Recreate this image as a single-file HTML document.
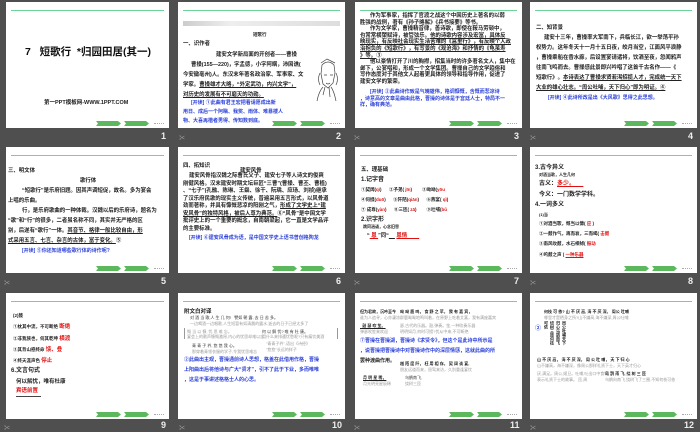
<!DOCTYPE html>
<html><head><meta charset="utf-8">
<style>
*{margin:0;padding:0;box-sizing:border-box}
body{width:700px;height:431px;background:#4f4f4f;position:relative;overflow:hidden;font-family:"Liberation Sans","Noto Sans CJK SC",sans-serif}
.s{position:absolute;background:#fff;overflow:hidden}
.s:before{content:"";position:absolute;left:5px;right:5px;top:8px;height:1px;background:#6fd49c}
.btn{position:absolute;bottom:2px;height:5px;width:25px;background:#5cb85c;clip-path:polygon(0 0,88% 0,100% 50%,88% 100%,0 100%,8% 50%)}
.b1{right:48px}.b2{right:20px}
.dots{position:absolute;bottom:3px;right:5px;width:10px;height:2px;border-top:1px dotted #aaa}
.t{position:absolute;font-size:5.4px;line-height:10px;color:#222;white-space:nowrap;font-weight:bold}
.bl{color:#2a3fd8;font-weight:bold}
.r{color:#e01010;font-weight:bold}
.u{text-decoration:underline}
.n{position:absolute;color:#eee;font-size:9px;font-weight:bold}
.ic{position:absolute;color:#aaa;font-size:6px}
.g{color:#999;font-weight:normal}
</style></head><body>

<!-- row 1 -->
<div class="s" style="left:6px;top:2px;width:163px;height:126px">
 <div class="t" style="left:19px;top:44px;font-size:10.5px;line-height:12px;color:#111">7&nbsp;&nbsp;&nbsp;短歌行&nbsp;&nbsp;*归园田居(其一)</div>
 <div class="t" style="left:38px;top:96px;font-size:5.5px">第一PPT模板网-WWW.1PPT.COM</div>
 <div class="btn b1"></div><div class="btn b2"></div><div class="dots"></div>
</div>
<div class="s" style="left:178px;top:2px;width:167px;height:126px">
 <div style="position:absolute;left:5px;top:19px;width:157px;height:5px;background:linear-gradient(90deg,#ccc,#eee 30%,#ddd)"></div>
 <div class="t" style="left:75px;top:28px;font-size:4.5px">短歌行</div>
 <div class="t" style="left:5px;top:37px">一、识作者</div>
 <div class="t" style="left:38px;top:48px">建安文学新局面的开创者——曹操</div>
 <div class="t" style="left:13px;top:58px">曹操(155—220)，字孟德，小字阿瞒，沛国谯(</div>
 <div class="t" style="left:5px;top:68px">今安徽亳州)人。东汉末年著名政治家、军事家、文</div>
 <div class="t" style="left:5px;top:78px">学家。<span class="u">曹操雄才大略，“外定武功，内兴文学”，</span></div>
 <div class="t u" style="left:5px;top:88px">对历史的发展有不可磨灭的功勋。</div>
 <div class="t bl" style="left:13px;top:97px;font-size:5px;line-height:9px">[开读] ①此曲有君王宏把看请愿成出新<br><span style="margin-left:-8px">用日、成后一个阿瞒、我奖、雨体、难暴楼人</span><br><span style="margin-left:-8px">物、大喜再楷者男得、传知数到底。</span></div>
 <svg style="position:absolute;left:134px;top:55px" width="30" height="45" viewBox="0 0 30 45"><g fill="none" stroke="#444" stroke-width=".7"><path d="M10 8q6-6 12 0l1 8-2 10-5 5-5-4-2-10z"/><path d="M9 6l6-4 8 4M12 18h3m3 0h3M14 26q2 2 4 0"/><path d="M13 30l-2 8m6-8 1 10M5 44q2-10 6-14m13 14q-2-10-5-14"/><path d="M8 16q-3 6 0 12m16-12q3 6 0 12"/></g></svg>
 <div class="btn b1"></div><div class="btn b2"></div><div class="dots"></div>
</div>
<div class="s" style="left:355px;top:2px;width:167px;height:126px">
 <div class="t" style="left:15px;top:11px;line-height:6.6px">作为军事家，指挥了官渡之战这个中国历史上著名的以弱<br><span style="margin-left:-10px">胜强的战例，著有《孙子略解》《兵书接要》等书。</span><br>作为文学家，曹操精音律，善诗歌，即使在鞍马劳顿中，<br><span style="margin-left:-10px">也常常横槊赋诗，被管弦乐。<span class="u">他的诗歌内容涉及宏富，具体反</span></span><br><span style="margin-left:-10px" class="u">映现实，有反映社会现实生活苦难的《蒿里行》，有反映个人政</span><br><span style="margin-left:-10px" class="u">治抱负的《短歌行》，有写景的《观沧海》和抒情的《龟虽寿</span><br><span style="margin-left:-10px"><span class="u">》等。</span>③</span><br>他以豪情打开了川的胸襟，招集当时的许多著名文人，集中在<br><span style="margin-left:-10px">邺下，公宴唱和，形成一个文学集团。曹操自己的文学趋俗和</span><br><span style="margin-left:-10px">写作态度对于其他文人起着更具体的领导和指导作用，促进了</span><br><span style="margin-left:-10px">建安文学的繁荣。</span></div>
 <div class="t bl" style="left:15px;top:87px;font-size:5px;line-height:6.6px">[开读] ②此曲诗作致是气魄雄伟，格调慷慨，含慨而悲凉诗<br><span style="margin-left:-10px">，诗意高的文章是曲由此格，曹操的诗体是于宫廷人士，特局不一</span><br><span style="margin-left:-10px">样，确有典范。</span></div>
 <div class="btn b1"></div><div class="btn b2"></div><div class="dots"></div>
</div>
<div class="s" style="left:530px;top:2px;width:167px;height:126px">
 <div class="t" style="left:6px;top:21px">二、知背景</div>
 <div class="t" style="left:14px;top:31px">建安十三年，曹操率大军南下，兵临长江，欲一举荡平孙</div>
 <div class="t" style="left:6px;top:41px">权势力。这年冬天十一月十五日夜，皎月当空，江面风平浪静</div>
 <div class="t" style="left:6px;top:51px">，曹操乘船在香水廊，后设置宴请诸将，饮酒至夜，忽闻鸦声</div>
 <div class="t" style="left:6px;top:61px">往南飞鸣而去。曹操感此景即兴吟唱了这首千古名作——《</div>
 <div class="t" style="left:6px;top:71px">短歌行》。<span class="u">本诗表达了曹操求贤若渴招揽人才，完成统一天下</span></div>
 <div class="t u" style="left:6px;top:81px">大业的雄心壮志。“周公吐哺，天下归心”即为明证。<span style="text-decoration:none">④</span></div>
 <div class="t bl" style="left:18px;top:91px;font-size:5px">[开读] ④此诗所改是出《大风歌》思得之此思想。</div>
 <div class="btn b1"></div><div class="btn b2"></div><div class="dots"></div>
</div>

<div class="n" style="left:161px;top:131px">1</div>
<div class="ic" style="left:179px;top:133px">✂</div><div class="n" style="left:336px;top:131px">2</div>
<div class="ic" style="left:354px;top:133px">✂</div><div class="n" style="left:514px;top:131px">3</div>
<div class="ic" style="left:530px;top:133px">✂</div><div class="n" style="left:688px;top:131px">4</div>

<!-- row 2 -->
<div class="s" style="left:6px;top:147px;width:163px;height:126px">
 <div class="t" style="left:2px;top:19px">三、明文体</div>
 <div class="t" style="left:74px;top:29px">歌行体</div>
 <div class="t" style="left:16px;top:39px">“短歌行”是乐府旧题。因其声调短促，故名。多为宴会</div>
 <div class="t" style="left:2px;top:49px">上唱的乐曲。</div>
 <div class="t" style="left:16px;top:59px">行，是乐府歌曲的一种体裁。汉魏以后的乐府诗，题名为</div>
 <div class="t" style="left:2px;top:69px">“歌”和“行”的很多，二者虽名称不同，其实并无严格的区</div>
 <div class="t" style="left:2px;top:79px">别，后遂有“歌行”一体。<span class="u">其音节、格律一般比较自由，形</span></div>
 <div class="t" style="left:2px;top:89px"><span class="u">式采用五言、七言、杂言的古体，富于变化。</span>⑤</div>
 <div class="t bl" style="left:16px;top:99px;font-size:5px">[开读] ⑤你还知道哪些歌行体的诗作呢?</div>
 <div class="btn b1"></div><div class="btn b2"></div><div class="dots"></div>
</div>
<div class="s" style="left:178px;top:147px;width:167px;height:126px">
 <div class="t" style="left:5px;top:14px">四、拓知识</div>
 <div class="t" style="left:62px;top:20px;line-height:8px">建安风骨</div>
 <div class="t" style="left:11px;top:26px;line-height:7.5px">建安风骨指汉魏之际曹氏父子、建安七子等人诗文的俊爽<br><span style="margin-left:-6px">刚健风格。汉末建安时期文坛巨匠“三曹”(曹操、曹丕、曹植)</span><br><span style="margin-left:-6px">、“七子”(孔融、陈琳、王粲、徐干、阮瑀、应玚、刘桢)继承</span><br><span style="margin-left:-6px">了汉乐府民歌的现实主义传统，普遍采用五言形式，以风骨遒</span><br><span style="margin-left:-6px">劲而著称，并具有慷慨悲凉的阳刚之气，<span class="u">形成了文学史上“建</span></span><br><span style="margin-left:-6px"><span class="u">安风骨”的独特风格，被后人尊为典范。</span>⑥“风骨”是中国文学</span><br><span style="margin-left:-6px">批评史上的一个重要的概念，自南朝梁起，它一直是文学品评</span><br><span style="margin-left:-6px">的主要标准。</span></div>
 <div class="t bl" style="left:11px;top:86px;font-size:5px">[开读] ⑥建安风骨成为语，是中国文学史上语书曾创格陶龙</div>
 <div class="btn b1"></div><div class="btn b2"></div><div class="dots"></div>
</div>
<div class="s" style="left:355px;top:147px;width:167px;height:126px">
 <div class="t" style="left:6px;top:18px">五、理基础</div>
 <div class="t" style="left:6px;top:28px;font-size:6px">1.记字音</div>
 <div class="t" style="left:6px;top:38px;font-size:4.5px">①契阔(<span class="r">qì</span>)&nbsp;&nbsp;&nbsp;&nbsp;&nbsp;&nbsp;②予弟( <span class="r">jīn</span>)&nbsp;&nbsp;&nbsp;&nbsp;&nbsp;&nbsp;&nbsp;&nbsp;③呦呦(<span class="r">yōu</span></div>
 <div class="t" style="left:6px;top:48px;font-size:4.5px">④何掇(<span class="r">duō</span>)&nbsp;&nbsp;&nbsp;&nbsp;&nbsp;&nbsp;⑤阡陌(<span class="r">qiān</span>)&nbsp;&nbsp;&nbsp;&nbsp;&nbsp;&nbsp;⑥燕宴(&nbsp;<span class="r">qì</span>)</div>
 <div class="t" style="left:6px;top:58px;font-size:4.5px">⑦ 成尊(<span class="r">yàn</span>)&nbsp;&nbsp;&nbsp;&nbsp;&nbsp;&nbsp;⑧三匝( <span class="r">zā</span>)&nbsp;&nbsp;&nbsp;&nbsp;&nbsp;&nbsp;&nbsp;&nbsp;⑨吐哺(<span class="r">bǔ</span></div>
 <div class="t" style="left:6px;top:68px;font-size:6px">2.识字形</div>
 <div class="t" style="left:8px;top:75px;font-size:4px">跳同涵诵，心念旧恩</div>
 <div class="t" style="left:12px;top:84px">“<span class="r u">&nbsp;恩&nbsp;</span>”同“<span class="u">&nbsp;&nbsp;&nbsp;&nbsp;</span> <span class="r u">恩情&nbsp;&nbsp;&nbsp;&nbsp;&nbsp;&nbsp;&nbsp;&nbsp;</span></div>
 <div class="btn b1"></div><div class="btn b2"></div><div class="dots"></div>
</div>
<div class="s" style="left:530px;top:147px;width:167px;height:126px">
 <div class="t" style="left:5px;top:16px;font-size:6px">3.古今异义</div>
 <div class="t" style="left:9px;top:23px;font-size:4px">对酒当歌，人生几何</div>
 <div class="t" style="left:9px;top:32px;font-size:6px">古义：<span class="r u">多少。&nbsp;&nbsp;&nbsp;&nbsp;&nbsp;</span></div>
 <div class="t" style="left:9px;top:43px;font-size:6px">今义：一门数学学科。</div>
 <div class="t" style="left:5px;top:53px;font-size:6px">4.一词多义</div>
 <div class="t" style="left:9px;top:63px;font-size:4px">(1)当</div>
 <div class="t" style="left:9px;top:72px;font-size:4.5px">①对酒当歌，慨当以慷( <span class="r">应</span> )</div>
 <div class="t" style="left:9px;top:82px;font-size:4.5px">②一鼓作气，再而衰，三而竭( <span class="r">击鼓</span></div>
 <div class="t" style="left:9px;top:92px;font-size:4.5px">③南风吹鼓，水石相搏( <span class="r">振动</span></div>
 <div class="t" style="left:9px;top:103px;font-size:4.5px">④呜鼓之声 ( <span class="r u">一种乐器</span></div>
 <div class="btn b1"></div><div class="btn b2"></div><div class="dots"></div>
</div>

<div class="ic" style="left:4px;top:278px">✂</div><div class="n" style="left:161px;top:276px">5</div>
<div class="n" style="left:336px;top:276px">6</div>
<div class="ic" style="left:354px;top:278px">✂</div><div class="n" style="left:514px;top:276px">7</div>
<div class="ic" style="left:530px;top:278px">✂</div><div class="n" style="left:688px;top:276px">8</div>

<!-- row 3 -->
<div class="s" style="left:6px;top:293px;width:163px;height:126px">
 <div class="t" style="left:7px;top:18px;font-size:4.5px">(2)鼓</div>
 <div class="t" style="left:7px;top:29px;font-size:4.5px">①枕其中流，不可断绝 <span class="r" style="font-size:5.5px">断绝</span></div>
 <div class="t" style="left:7px;top:41px;font-size:4.5px">②非我族也，何其乾坤 <span class="r" style="font-size:5.5px">横渡</span></div>
 <div class="t" style="left:7px;top:52px;font-size:4.5px">③其背山惑终命 <span class="r" style="font-size:5.5px">馈、叠</span></div>
 <div class="t" style="left:7px;top:63px;font-size:4.5px">④终天涯声色 <span class="r" style="font-size:5.5px">停止</span></div>
 <div class="t" style="left:5px;top:73px;font-size:6px">6.文言句式</div>
 <div class="t" style="left:10px;top:84px;font-size:5.5px">何以解忧，唯有杜康</div>
 <div class="t r" style="left:10px;top:94px;font-size:5.5px;border-bottom:1px solid #444;line-height:9px">宾语前置&nbsp;&nbsp;</div>
 <div class="btn b1"></div><div class="btn b2"></div><div class="dots"></div>
</div>
<div class="s" style="left:178px;top:293px;width:167px;height:126px">
 <div class="t" style="left:6px;top:14px;font-size:5.5px">附文白对译</div>
 <div class="t g" style="left:12px;top:22px;font-size:4px;line-height:6px"><span style="color:#333">对 酒 当 歌,人 生 几 何!&nbsp;&nbsp;&nbsp;譬如 朝 露, 去 日 苦 多。</span><br>一边喝酒一边唱歌,人生短暂有如清晨的露水,逝去的日子已经太多了</div>
 <div style="position:absolute;left:6px;top:35px;width:154px;height:11px;border-left:1px solid #999;border-right:1px solid #999"></div>
 <div class="t g" style="left:9px;top:36px;font-size:4px;line-height:5px">慨 当 以 慷, 忧 思 难 忘。<br>宴会上的歌声慷慨激昂,内心的忧思却难以忘</div>
 <div class="t g" style="left:84px;top:36px;font-size:4px;line-height:5px"><span style="color:#333">何 以 解 忧? 唯 有 杜 康。</span><br>用什么来排遣忧愁呢?只有痛饮美酒</div>
 <div class="t g" style="left:14px;top:50px;font-size:4px;line-height:6px"><span style="color:#333">青 青 子 衿, 悠 悠 我 心。</span><br>那穿着青领衣服的学子,令我忧思难忘</div>
 <div class="t g" style="left:88px;top:48px;font-size:4px;line-height:6px">"青青子衿",语出《诗经》<br>"悠悠"长远的样子</div>
 <div class="t bl" style="left:6px;top:62px;font-size:5px;line-height:10px">②此曲出主观，曹操通前诗人思想，格盖在此借用作格，曹操<br>上阳曲出后将他诗与广大“贤才”，引不了此于下业，多而唯唯<br>，这是于事讲述格格士人的心思。</div>
 <div class="btn b1"></div><div class="btn b2"></div><div class="dots"></div>
</div>
<div class="s" style="left:355px;top:293px;width:167px;height:126px">
 <div class="t" style="left:5px;top:16px;font-size:4px;line-height:6px">但为君故，沉吟至今<br><span class="g">谁为人追寻，心亦凄凉</span></div>
 <div class="t" style="left:45px;top:16px;font-size:4px;line-height:6px">呦 呦 鹿 鸣， 食 野 之 苹。 我 有 嘉 宾，<br><span class="g">群鹿呦呦地鸣叫着，在原野上吃着艾蒿，我有满座嘉宾</span></div>
 <div class="t" style="left:5px;top:30px;font-size:4px;line-height:6px"><span class="u">&nbsp;&nbsp;鼓 瑟 吹 笙。</span><br><span class="g">弹瑟吹笙来欢迎</span></div>
 <div class="t g" style="left:45px;top:30px;font-size:4px;line-height:6px">瑟,古代的乐器。鼓,弹奏。笙,一种吹奏乐器<br>明明如月,何时可掇?忧从中来,不可断绝</div>
 <div class="t bl" style="left:5px;top:43px;font-size:5px;line-height:10px">⑦曹操在曹操湖，曹操诗《求贤令》，但这个是此诗中所示是<br>，说曹操把曹操诗中对曹操诗作中的深层情感，这就此曲的所<br><span style="color:#222">罢种渡曲作用。</span></div>
 <div class="t" style="left:45px;top:68px;font-size:4px;line-height:6px">越 陌 度 阡， 枉 用 相 存。 契 阔 谈 宴,<br><span class="g">朋友远道而来，屈驾来访，久别重逢宴饮</span></div>
 <div class="t" style="left:8px;top:82px;font-size:4px;line-height:6px"><span class="u">月 明 星 稀，</span><br><span class="g">月光明亮星辰稀</span></div>
 <div class="t g" style="left:50px;top:82px;font-size:4px;line-height:6px"><span style="color:#333">乌鹊南飞,</span><br>绕树三匝</div>
 <div class="btn b1"></div><div class="btn b2"></div><div class="dots"></div>
</div>
<div class="s" style="left:530px;top:293px;width:167px;height:126px">
 <div class="t" style="left:14px;top:16px;font-size:4px;line-height:6px">何枝 可 依? 山 不 厌 高, 海 不 厌 深。 周公 吐哺<br><span class="g">哪里才是栖身之所?山不嫌高,海不嫌深,周公吐哺</span></div>
 <div class="t bl" style="left:5px;top:31px;font-size:6px">②</div>
 <div class="t" style="left:13px;top:28px;font-size:4px;line-height:6px;height:26px;writing-mode:vertical-rl;white-space:normal">周公吐哺天下归心乌鹊南飞绕树三匝何枝可依</div>
 <div class="t" style="left:7px;top:64px;font-size:4px;line-height:6px">山 不 厌 高， 海 不 厌 深。 周 公 吐 哺， 天 下 归 心<br><span class="g">山不嫌高，海不嫌深，像周公那样礼贤下士，天下英才归心</span></div>
 <div class="t g" style="left:7px;top:78px;font-size:4px;line-height:6px">厌,满足。周公,姬旦。吐哺,吐出口中食物<br>表示礼贤下士的故事。 匝,周</div>
 <div class="t" style="left:75px;top:78px;font-size:4px;line-height:6px">乌 鹊 南 飞, 绕 树 三 匝<br><span class="g">乌鹊向南飞,绕树飞了三圈,不知何枝可依</span></div>
 <div class="btn b1"></div><div class="btn b2"></div><div class="dots"></div>
</div>

<div class="ic" style="left:4px;top:423px">✂</div><div class="n" style="left:161px;top:420px">9</div>
<div class="ic" style="left:179px;top:423px">✂</div><div class="n" style="left:332px;top:420px">10</div>
<div class="ic" style="left:354px;top:423px">✂</div><div class="n" style="left:510px;top:420px">11</div>
<div class="ic" style="left:530px;top:423px">✂</div><div class="n" style="left:684px;top:420px">12</div>
</body></html>
